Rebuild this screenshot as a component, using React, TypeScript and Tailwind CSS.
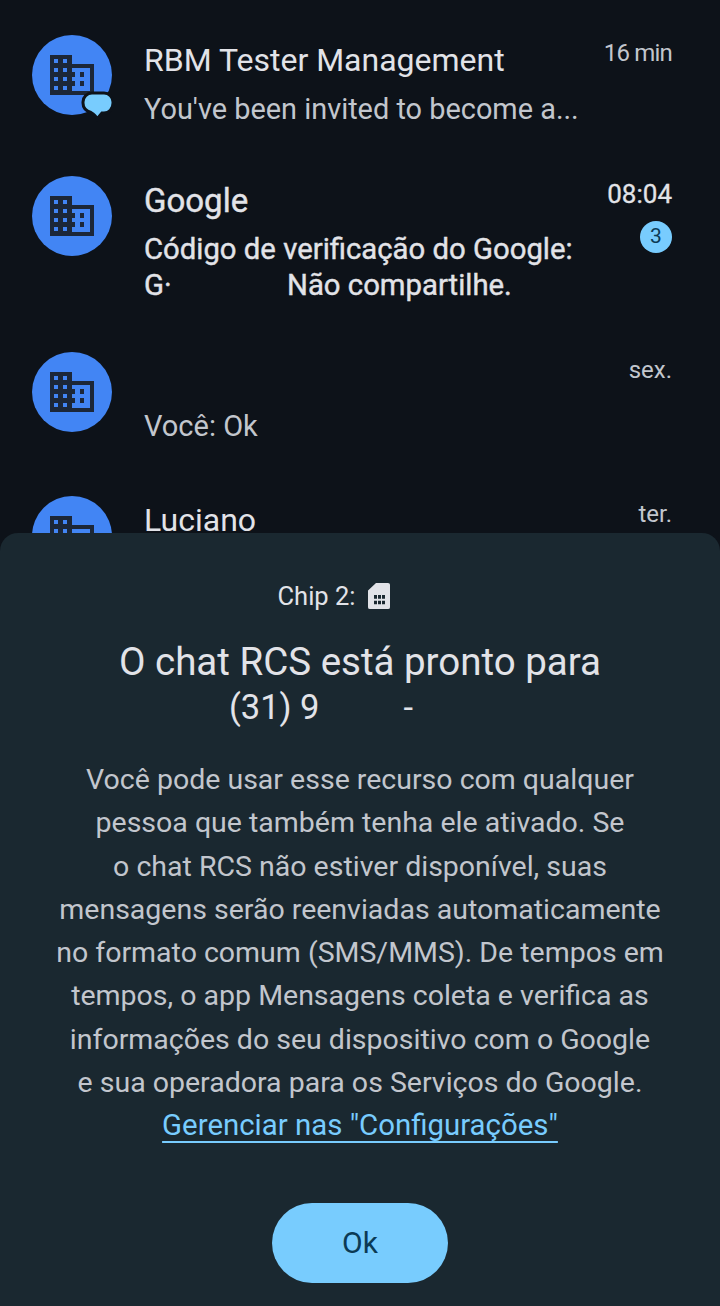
import React from "react";

const font = { fontFamily: '"Roboto", "Noto Sans", sans-serif' };

function Building() {
  return (
    <svg width="44" height="40" viewBox="0 0 44 40" className="block">
      <path fillRule="evenodd" fill="#1c2738" d="M0 0H22V9H44V40H0Z
        M4 4h4v4h-4z M13 4h4v4h-4z M4 13h4v4h-4z M13 13h4v4h-4z M4 22h4v4h-4z M13 22h4v4h-4z M4 31h4v4h-4z M13 31h4v4h-4z
        M22 13H40V36H22V31h3V26h-3V22h3V17h-3Z" />
      <rect x="30" y="17" width="4" height="5" fill="#1c2738" />
      <rect x="30" y="26" width="4" height="5" fill="#1c2738" />
    </svg>
  );
}

function Avatar({ badge }: { badge?: boolean }) {
  return (
    <div className="relative w-20 h-20 shrink-0 rounded-full bg-[#4285f4] flex items-center justify-center">
      <Building />
      {badge && (
        <svg width="34" height="34" viewBox="0 0 34 34" className="absolute left-[49px] top-[56px]">
          <path d="M11 2H23C28 2 32 6 32 11V12C32 18 28 22 23 22H21L16 28C15 25 13 23 10 21.500C5 20 2 17 2 12V11C2 6 6 2 11 2Z" fill="#78ccfe" stroke="#0d1219" strokeWidth="3" />
        </svg>
      )}
    </div>
  );
}

export default function App() {
  return (
    <div style={font} className="w-[720px] h-[1306px] overflow-hidden bg-[#0d1219] flex flex-col">
      <div className="h-[533px] overflow-hidden pl-8 pr-12 pt-[35px] flex flex-col">
        <div className="flex h-[141px] shrink-0">
          <Avatar badge />
          <div className="ml-[32px] flex-1 min-w-0">
            <div className="text-[32px] leading-[50px] text-[#e2e3e8]">RBM Tester Management</div>
            <div className="text-[28.9px] leading-[48px] text-[#c2c6cd]">You've been invited to become a...</div>
          </div>
          <div className="text-[24px] leading-[36px] tracking-[-0.8px] text-[#c2c6cd]">16 min</div>
        </div>
        <div className="flex h-[176px] shrink-0">
          <Avatar />
          <div className="ml-[32px] flex-1 min-w-0">
            <div className="text-[33px] leading-[50px] [-webkit-text-stroke:0.4px_#e2e3e8] text-[#e2e3e8]">Google</div>
            <div className="text-[29.3px] leading-[36px] mt-[5px] [-webkit-text-stroke:0.4px_#e2e3e8] text-[#e2e3e8]">Código de verificação do Google:</div>
            <div className="text-[29.3px] leading-[36px] [-webkit-text-stroke:0.4px_#e2e3e8] text-[#e2e3e8] flex"><span className="w-[143px]">G·</span><span>Não compartilhe.</span></div>
          </div>
          <div className="flex flex-col items-end">
            <div className="text-[26px] leading-[36px] [-webkit-text-stroke:0.3px_#e2e3e8] text-[#e2e3e8]">08:04</div>
            <div className="mt-[9px] w-8 h-8 rounded-full bg-[#78ccfe] text-[#0b3a55] text-[21px] flex items-center justify-center">3</div>
          </div>
        </div>
        <div className="flex h-[144px] shrink-0">
          <Avatar />
          <div className="ml-[32px] flex-1 min-w-0">
            <div className="h-[50px]" />
            <div className="text-[29px] leading-[48px] text-[#c2c6cd]">Você: Ok</div>
          </div>
          <div className="text-[24px] leading-[36px] text-[#c2c6cd]">sex.</div>
        </div>
        <div className="flex shrink-0">
          <Avatar />
          <div className="ml-[32px] flex-1 min-w-0">
            <div className="text-[32px] leading-[48px] text-[#e2e3e8]">Luciano</div>
          </div>
          <div className="text-[24px] leading-[36px] text-[#c2c6cd]">ter.</div>
        </div>
      </div>
      <div className="flex-1 rounded-t-[18px] bg-[#1a2830] flex flex-col items-center pt-[43px]">
        <div className="flex items-center h-[40px] text-[25.5px] text-[#e2e3e8] mr-[53px]">
          <span>Chip 2:</span>
          <svg width="22" height="26" viewBox="0 0 22 28" preserveAspectRatio="none" className="ml-[12px]">
            <path fillRule="evenodd" fill="#e2e3e8" d="M8 0H20Q22 0 22 2V26Q22 28 20 28H2Q0 28 0 26V8Z
              M6 13h3v4h-3z M10 13h3v4h-3z M14 13h3v4h-3z M6 19h3v4h-3z M10 19h3v4h-3z M14 19h3v4h-3z" />
          </svg>
        </div>
        <div className="mt-[23px] text-[38.5px] leading-[46px] text-[#e2e3e8] text-center">
          <div>O chat RCS está pronto para</div>
          <div className="flex justify-center text-[34.5px] leading-[44px]"><span>(31) 9</span><span className="ml-[84px]">-</span><span className="w-[78px]" /></div>
        </div>
        <div className="mt-[29px] text-[28.5px] leading-[43.3px] text-[#c2c6cd] text-center whitespace-nowrap">
          <div>Você pode usar esse recurso com qualquer</div>
          <div>pessoa que também tenha ele ativado. Se</div>
          <div>o chat RCS não estiver disponível, suas</div>
          <div>mensagens serão reenviadas automaticamente</div>
          <div>no formato comum (SMS/MMS). De tempos em</div>
          <div>tempos, o app Mensagens coleta e verifica as</div>
          <div>informações do seu dispositivo com o Google</div>
          <div>e sua operadora para os Serviços do Google.</div>
          <div className="text-[29.4px] text-[#78ccfe] underline underline-offset-[6px] decoration-2">Gerenciar nas "Configurações"</div>
        </div>
        <div className="mt-[55px] w-[176px] h-[80px] rounded-full bg-[#78ccfe] text-[#0b3a55] text-[30px] flex items-center justify-center">Ok</div>
      </div>
    </div>
  );
}
